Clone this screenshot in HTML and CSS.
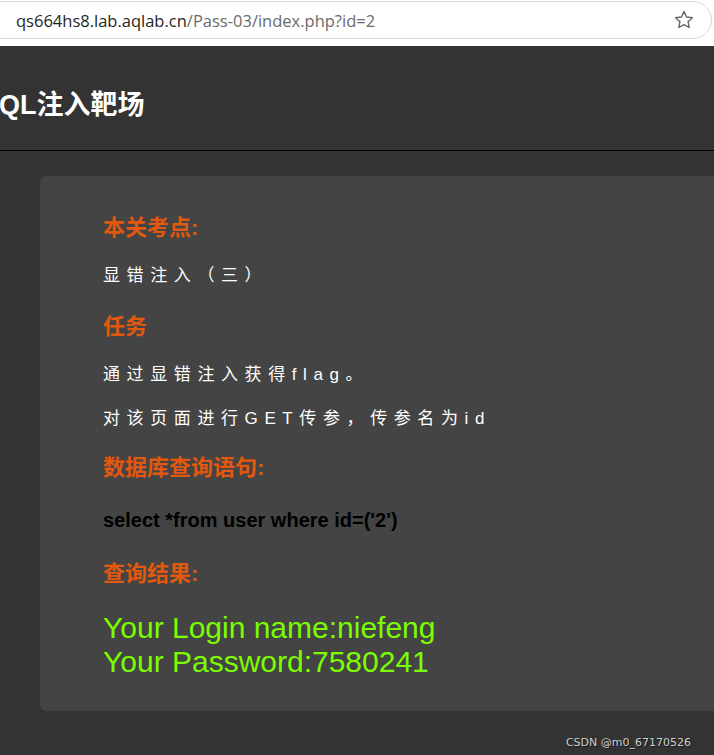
FILE: index.html
```html
<!DOCTYPE html>
<html lang="zh-CN">
<head>
<meta charset="utf-8">
<title>SQL注入靶场</title>
<link rel="stylesheet" href="styles.css">
</head>
<body>
<div class="chrome">
  <div class="urlbar">
    <span class="url"><span class="host">qs664hs8.lab.aqlab.cn</span><span class="path">/Pass-03/index.php?id=2</span></span>
    <svg class="star" width="22" height="22" viewBox="0 0 24 24" aria-hidden="true">
      <path d="M12 2.8l2.75 5.9 6.45.75-4.8 4.4 1.3 6.35L12 17l-5.7 3.2 1.3-6.35-4.8-4.4 6.45-.75z" fill="none" stroke="#5f6368" stroke-width="1.5" stroke-linejoin="round"/>
    </svg>
  </div>
</div>
<header class="top">
  <h1 class="brand">SQL注入靶场</h1>
</header>
<main class="wrap">
  <section class="card">
    <h2 class="ttl">本关考点:</h2>
    <p class="txt t1">显错注入（三）</p>
    <h2 class="ttl t2">任务</h2>
    <p class="txt t3">通过显错注入获得flag。</p>
    <p class="txt t4">对该页面进行GET传参，传参名为id</p>
    <h2 class="ttl t5">数据库查询语句:</h2>
    <p class="sql">select *from user where id=('2')</p>
    <h2 class="ttl t7">查询结果:</h2>
    <div class="res">Your Login name:niefeng<br>Your Password:7580241</div>
  </section>
</main>
<div class="watermark">CSDN @m0_67170526</div>
</body>
</html>
```

FILE: styles.css
```css
html, body {
  margin: 0;
  padding: 0;
  overflow: hidden;
  background: #333333;
  height: 755px;
}
body {
  position: relative;
  font-family: "Liberation Sans", "Noto Sans CJK SC", sans-serif;
}

.chrome {
  height: 46px;
  background: #ffffff;
  box-sizing: border-box;
  padding-top: 1px;
  overflow: hidden;
}
.urlbar {
  height: 38px;
  margin: 0 2px 0 -20px;
  border: 1px solid #d6d6d6;
  border-radius: 20px;
  box-sizing: border-box;
  display: flex;
  align-items: center;
  padding: 0 16px 0 35px;
}
.url {
  flex: 1;
  font-family: "Open Sans", "Liberation Sans", sans-serif;
  font-size: 16.5px;
  white-space: nowrap;
}
.host { color: #1f1f1f; }
.path { color: #6b6b6b; }
.star { flex: none; }

.top {
  background: #333333;
  border-bottom: 1px solid #000000;
  padding-top: 44px;
  height: 60px;
}
.brand {
  margin: 0 0 0 -19px;
  font-size: 27px;
  line-height: 30px;
  font-weight: bold;
  color: #ffffff;
  white-space: nowrap;
}

.wrap {
  padding-top: 25px;
}
.card {
  margin: 0 -30px 0 40px;
  background: #444444;
  border-radius: 6px;
  padding: 37px 0 32px 63px;
}

.ttl {
  margin: 0;
  font-size: 22px;
  line-height: 30px;
  font-weight: bold;
  color: #e2580e;
}
.txt {
  margin: 21px 0 0;
  font-size: 17px;
  line-height: 24px;
  letter-spacing: 6.6px;
  color: #ffffff;
}
.t2 { margin-top: 24px; }
.t3 { margin-top: 21px; }
.t4 { margin-top: 20px; }
.t5 { margin-top: 22px; }
.sql {
  margin: 23px 0 0;
  font-size: 20px;
  line-height: 28px;
  font-weight: bold;
  color: #000000;
}
.t7 { margin-top: 25px; }
.res {
  margin-top: 22px;
  font-size: 30px;
  line-height: 34px;
  color: #7cfc00;
}

.watermark {
  position: absolute;
  right: 23px;
  bottom: 6px;
  font-family: "DejaVu Sans", sans-serif;
  font-size: 11px;
  color: #cfcfcf;
  text-shadow: 1px 1px 1px rgba(0, 0, 0, 0.6);
}
```
